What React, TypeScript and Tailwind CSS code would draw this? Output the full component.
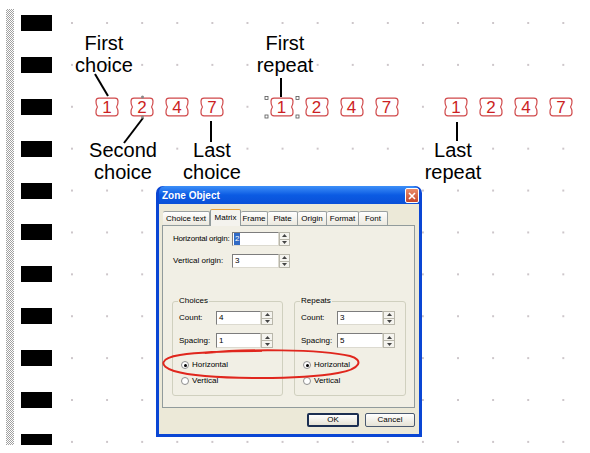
import React from "react";

const digits = ["1", "2", "4", "7"];

// one red "ticket" box from the zone layout
function Ticket({ d }: { d: string }) {
  return (
    <div className="relative flex h-[20px] w-[24px] items-center justify-center">
      <svg className="absolute inset-0" width="24" height="20" viewBox="0 0 24 20">
        <path
          d="M4 1.2H20Q22.8 1.2 23 4Q23.2 7.5 21.6 10Q23.2 12.5 23 16Q22.8 18.8 20 18.8H4Q1.2 18.8 1 16Q0.8 12.5 2.4 10Q0.8 7.5 1 4Q1.2 1.2 4 1.2Z"
          fill="white"
          stroke="#d0484a"
          strokeWidth="1.2"
        />
      </svg>
      <span className="relative text-[17px] leading-none text-[#cc1f24]">{d}</span>
    </div>
  );
}

function Note({ lines, className }: { lines: string[]; className: string }) {
  return (
    <div className={`absolute w-[80px] text-center text-[20px] leading-[22px] text-black ${className}`}>
      {lines.map((l) => (
        <div key={l}>{l}</div>
      ))}
    </div>
  );
}

function Spin({ w }: { w: string }) {
  return (
    <div className={`flex h-full flex-col ${w}`}>
      <div className="flex flex-1 items-center justify-center border border-[#b9b7ab] bg-[#f5f4ef]">
        <svg width="5" height="3" viewBox="0 0 5 3">
          <path d="M0 3H5L2.5 0Z" fill="#444" />
        </svg>
      </div>
      <div className="flex flex-1 items-center justify-center border border-t-0 border-[#b9b7ab] bg-[#f5f4ef]">
        <svg width="5" height="3" viewBox="0 0 5 3">
          <path d="M0 0H5L2.5 3Z" fill="#444" />
        </svg>
      </div>
    </div>
  );
}

function Field({ value, sel, w, sw }: { value: string; sel?: boolean; w: string; sw: string }) {
  return (
    <div className="flex h-full">
      <div className={`flex h-full items-center border border-b-[#dcdad0] border-l-[#7d7d7d] border-r-[#dcdad0] border-t-[#7d7d7d] bg-white pl-[1px] ${w}`}>
        <span className={sel ? "bg-[#316ac5] px-[1px] text-white" : "px-[1px]"}>{value}</span>
      </div>
      <Spin w={sw} />
    </div>
  );
}

function Radio({ on, label }: { on?: boolean; label: string }) {
  return (
    <div className="flex h-[12px] items-center pl-[8px]">
      <div className="flex h-[8px] w-[8px] items-center justify-center rounded-full border border-[#8e8e8e] bg-white">
        {on && <div className="h-[3px] w-[3px] rounded-full bg-black" />}
      </div>
      <span className="ml-[3px] whitespace-nowrap">{label}</span>
    </div>
  );
}

function Group({ title, count, spacing, w, lw, iw, sw }: { title: string; count: string; spacing: string; w: string; lw: string; iw: string; sw: string }) {
  return (
    <fieldset className={`h-[100px] rounded-[3px] border border-[#d0d0bf] ${w}`}>
      <legend className="ml-[5px] px-[1px] leading-[10px]">{title}</legend>
      <div className="mt-[5px] flex h-[14px] items-center pl-[6px]">
        <span className={`shrink-0 whitespace-nowrap ${lw}`}>Count:</span>
        <Field value={count} w={iw} sw={sw} />
      </div>
      <div className="mt-[8px] flex h-[15px] items-center pl-[6px]">
        <span className={`shrink-0 whitespace-nowrap ${lw}`}>Spacing:</span>
        <Field value={spacing} w={iw} sw={sw} />
      </div>
      <div className="mt-[11px]">
        <Radio on label="Horizontal" />
      </div>
      <div className="mt-[4px]">
        <Radio label="Vertical" />
      </div>
    </fieldset>
  );
}

const tabs = [
  { name: "Choice text", w: "w-[47px]" },
  { name: "Matrix", w: "w-[31px]", on: true },
  { name: "Frame", w: "w-[27px]" },
  { name: "Plate", w: "w-[30px]" },
  { name: "Origin", w: "w-[29px]" },
  { name: "Format", w: "w-[32px]" },
  { name: "Font", w: "w-[29px]" },
];

export default function App() {
  return (
    <div className="relative h-[453px] w-[590px] overflow-hidden bg-white font-['Liberation_Sans',Arial,sans-serif]">
      <div className="flex h-full">
        {/* left margin strip and black markers */}
        <div className="flex h-[445px] overflow-hidden">
          <div className="ml-[6px] mt-[9px] h-[436px] w-[8px] bg-[repeating-conic-gradient(#a0a0a0_0_25%,#ffffff_0_50%)] bg-[length:2px_2px]" />
          <div className="ml-[7px] flex flex-col gap-[25.9px] pt-[15px]">
            {Array.from({ length: 11 }).map((_, i) => (
              <div key={i} className="h-4 w-[31px] shrink-0 bg-black" />
            ))}
          </div>
        </div>
        {/* dotted grid */}
        <div className="flex-1 bg-[radial-gradient(circle,#cdc6ca_0.8px,transparent_1.4px)] bg-[length:35.1px_41.9px] bg-[position:2.45px_2.05px]" />
      </div>

      {/* ticket rows */}
      <div className="absolute left-[95px] top-[97px] flex gap-[45.5px]">
        {["c", "r", "l"].map((g) => (
          <div key={g} className="flex gap-[11px]">
            {digits.map((d) => (
              <Ticket key={d} d={d} />
            ))}
          </div>
        ))}
      </div>

      <Note lines={["First", "choice"]} className="left-[64px] top-[32px]" />
      <Note lines={["Second", "choice"]} className="left-[83px] top-[139px]" />
      <Note lines={["Last", "choice"]} className="left-[172px] top-[139px]" />
      <Note lines={["First", "repeat"]} className="left-[245px] top-[32px]" />
      <Note lines={["Last", "repeat"]} className="left-[413px] top-[139px]" />

      {/* dialog */}
      <div className="absolute left-[156px] top-[186px] flex h-[251px] w-[266px] flex-col rounded-t-[7px] bg-[#0a46d4] px-[3px] pb-[3px] text-[8px] text-black">
        <div className="flex h-[18px] items-start justify-between rounded-t-[6px] bg-gradient-to-b from-[#3d8ff8] via-[#0b5be3] to-[#0a50d8]">
          <span className="mt-[4px] pl-[3px] text-[10px] font-bold leading-[11px] text-white">Zone Object</span>
          <div className="mt-[2px] flex h-[15px] w-[14px] items-center justify-center rounded-[2px] border border-white bg-gradient-to-b from-[#e98b6a] to-[#c4452a]">
            <svg width="8" height="8" viewBox="0 0 8 8">
              <path d="M1 1L7 7M7 1L1 7" stroke="white" strokeWidth="1.6" />
            </svg>
          </div>
        </div>
        <div className="flex flex-1 flex-col bg-[#ece9d8] pl-[3px] pr-[4px] pt-[5px]">
          <div className="relative z-10 flex h-[16px] items-end pl-[1px]">
            {tabs.map((t) =>
              t.on ? (
                <div key={t.name} className={`-mb-px flex h-[17px] items-center justify-center whitespace-nowrap rounded-t-[2px] border border-b-0 border-[#919b9c] border-t-[#e8a33a] bg-[#f4f3ee] ${t.w}`}>
                  {t.name}
                </div>
              ) : (
                <div key={t.name} className={`flex h-[14px] items-center justify-center whitespace-nowrap rounded-t-[2px] border-r border-t border-[#9aa0a0] bg-gradient-to-b from-[#fefefe] to-[#ece9df] ${t.w}`}>
                  {t.name}
                </div>
              )
            )}
          </div>
          <div className="flex h-[183px] flex-col border border-[#919b9c] bg-[#f1efe5]">
            <div className="mt-[6px] flex h-[14px] items-center pl-[10px]">
              <span className="w-[59px] shrink-0 whitespace-nowrap tracking-[-0.2px]">Horizontal origin:</span>
              <Field value="2" sel w="w-[47px]" sw="w-[11px]" />
            </div>
            <div className="mt-[8px] flex h-[14px] items-center pl-[10px]">
              <span className="w-[59px] shrink-0 whitespace-nowrap">Vertical origin:</span>
              <Field value="3" w="w-[47px]" sw="w-[11px]" />
            </div>
            <div className="mt-[28px] flex gap-[11px] pl-[9px]">
              <Group title="Choices" count="4" spacing="1" w="w-[111px]" lw="w-[37px]" iw="w-[45px]" sw="w-[12px]" />
              <Group title="Repeats" count="3" spacing="5" w="w-[112px]" lw="w-[36px]" iw="w-[46px]" sw="w-[12px]" />
            </div>
          </div>
          <div className="mt-[5px] flex justify-end gap-[6px]">
            <div className="flex h-[14px] w-[52px] items-center justify-center rounded-[2px] border-2 border-[#1c2f52] bg-gradient-to-b from-white to-[#e6e3d6]">OK</div>
            <div className="flex h-[14px] w-[50px] items-center justify-center rounded-[2px] border border-[#4b5a70] bg-gradient-to-b from-white to-[#e6e3d6]">Cancel</div>
          </div>
        </div>
      </div>

      {/* callout lines, selection handles, red ellipse */}
      <svg className="pointer-events-none absolute inset-0" width="590" height="453" viewBox="0 0 590 453">
        <g stroke="#000" strokeWidth="2">
          <line x1="95" y1="74" x2="108" y2="96" />
          <line x1="143" y1="118" x2="124" y2="143" />
          <line x1="211" y1="121" x2="211" y2="142" />
          <line x1="281" y1="78" x2="281" y2="97" />
          <line x1="457" y1="122" x2="457" y2="141" />
        </g>
        <g fill="#888">
          <circle cx="142.5" cy="97" r="1.5" />
          <circle cx="142.5" cy="117" r="1.5" />
        </g>
        <g fill="white" stroke="#555" strokeWidth="0.8">
          <rect x="265" y="96.5" width="3" height="3" />
          <rect x="296" y="96.5" width="3" height="3" />
          <rect x="265" y="115" width="3" height="3" />
          <rect x="296" y="115" width="3" height="3" />
        </g>
        <path
          d="M205 353C245 349 320 349 350 356C364 360 361 369 338 373C298 380 205 380 174 371C158 366 160 358 180 355C200 352 232 351 262 351"
          fill="none"
          stroke="#e0261d"
          strokeWidth="2"
        />
      </svg>
    </div>
  );
}
